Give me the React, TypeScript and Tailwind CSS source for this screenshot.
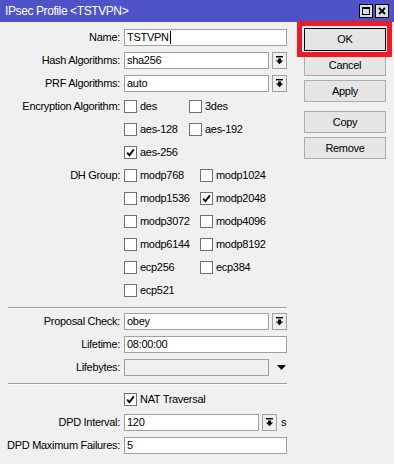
import React from "react";

const DropIcon = () => (
  <svg width="9" height="9" viewBox="0 0 9 9" className="block">
    <rect x="1" y="0" width="7" height="1.4" fill="#000" />
    <path d="M3 2.5h3v2h2.2L4.5 8.3 0.8 4.5H3z" fill="#000" />
  </svg>
);

const DropBtn = () => (
  <div className="w-[15px] h-[17px] ml-[3px] border border-[#a0a0a0] bg-[#f0f0f0] flex items-center justify-center">
    <DropIcon />
  </div>
);

const Check = () => (
  <svg width="9" height="9" viewBox="0 0 9 9" className="block">
    <path d="M1.2 4.6 L3.4 7.2 L7.8 1.4" fill="none" stroke="#000" strokeWidth="1.8" />
  </svg>
);

const Box = ({ checked }: { checked?: boolean }) => (
  <div className="w-[13px] h-[13px] border border-[#707070] bg-white flex items-center justify-center shrink-0">
    {checked ? <Check /> : null}
  </div>
);

const CB = ({ label, checked }: { label: string; checked?: boolean }) => (
  <div className="flex items-center">
    <Box checked={checked} />
    <span className="ml-[3px]">{label}</span>
  </div>
);

const Label = ({ children }: { children?: React.ReactNode }) => (
  <div className="w-[124px] pr-[4px] text-right shrink-0 whitespace-nowrap">{children}</div>
);

const Row = ({ children }: { children: React.ReactNode }) => (
  <div className="flex items-center h-[23px]">{children}</div>
);

const Input = ({ value, w, cursor }: { value: string; w: string; cursor?: boolean }) => (
  <div className={`${w} h-[17px] border border-[#a0a0a0] bg-white flex items-center pl-[2px]`}>
    <span>{value}</span>
    {cursor ? <span className="w-px h-[13px] bg-black ml-px" /> : null}
  </div>
);

const Sep = () => (
  <div className="ml-[8px] w-[279px] border-t border-t-[#a0a0a0] border-b border-b-white" />
);

const Btn = ({ label, focused, cls }: { label: string; focused?: boolean; cls: string }) => (
  <div
    className={`${cls} w-[82px] ${focused ? "h-[23px] border-[#000]" : "h-[22px] border-[#adadad]"} border bg-[#e5e5e5] flex items-center justify-center`}
  >
    {label}
  </div>
);

export default function App() {
  return (
    <div
      className="w-[394px] h-[464px] bg-[#f0f0f0] relative overflow-hidden text-[11px] text-black tracking-[-0.3px] leading-none"
      style={{ fontFamily: '"Liberation Sans", Arial, sans-serif' }}
    >
      {/* title bar */}
      <div className="h-[22px] bg-[#5053c8] flex items-center justify-between pl-[5px] pr-[5px]">
        <span className="text-white text-[12px] tracking-[-0.4px]">IPsec Profile &lt;TSTVPN&gt;</span>
        <div className="flex gap-[2px]">
          <div className="w-[14px] h-[14px] bg-[#dcdcdc] border border-black flex items-center justify-center">
            <div className="w-[8px] h-[8px] border border-black border-t-2" />
          </div>
          <div className="w-[14px] h-[14px] bg-[#dcdcdc] border border-black flex items-center justify-center">
            <svg width="8" height="8" viewBox="0 0 8 8" className="block">
              <path d="M1 1L7 7M7 1L1 7" stroke="#000" strokeWidth="1.8" />
            </svg>
          </div>
        </div>
      </div>

      <div className="flex">
        {/* left form */}
        <div className="w-[300px] flex flex-col pt-[4px]">
          <Row>
            <Label>Name:</Label>
            <Input value="TSTVPN" w="w-[163px]" cursor />
          </Row>
          <Row>
            <Label>Hash Algorithms:</Label>
            <Input value="sha256" w="w-[145px]" />
            <DropBtn />
          </Row>
          <Row>
            <Label>PRF Algorithms:</Label>
            <Input value="auto" w="w-[145px]" />
            <DropBtn />
          </Row>
          <Row>
            <Label>Encryption Algorithm:</Label>
            <div className="w-[65px]"><CB label="des" /></div>
            <CB label="3des" />
          </Row>
          <Row>
            <Label />
            <div className="w-[65px]"><CB label="aes-128" /></div>
            <CB label="aes-192" />
          </Row>
          <Row>
            <Label />
            <CB label="aes-256" checked />
          </Row>
          <Row>
            <Label>DH Group:</Label>
            <div className="w-[76px]"><CB label="modp768" /></div>
            <CB label="modp1024" />
          </Row>
          <Row>
            <Label />
            <div className="w-[76px]"><CB label="modp1536" /></div>
            <CB label="modp2048" checked />
          </Row>
          <Row>
            <Label />
            <div className="w-[76px]"><CB label="modp3072" /></div>
            <CB label="modp4096" />
          </Row>
          <Row>
            <Label />
            <div className="w-[76px]"><CB label="modp6144" /></div>
            <CB label="modp8192" />
          </Row>
          <Row>
            <Label />
            <div className="w-[76px]"><CB label="ecp256" /></div>
            <CB label="ecp384" />
          </Row>
          <Row>
            <Label />
            <CB label="ecp521" />
          </Row>
          <div className="mt-[5px]"><Sep /></div>
          <div className="mt-[1px]">
            <Row>
              <Label>Proposal Check:</Label>
              <Input value="obey" w="w-[145px]" />
              <DropBtn />
            </Row>
            <Row>
              <Label>Lifetime:</Label>
              <Input value="08:00:00" w="w-[163px]" />
            </Row>
            <Row>
              <Label>Lifebytes:</Label>
              <div className="w-[145px] h-[17px] border border-[#a0a0a0] bg-[#f0f0f0]" />
              <svg width="9" height="5" viewBox="0 0 9 5" className="block ml-[8px]">
                <path d="M0 0H9L4.5 5z" fill="#000" />
              </svg>
            </Row>
          </div>
          <div className="mt-[4px]"><Sep /></div>
          <div className="mt-[3px]">
            <Row>
              <Label />
              <CB label="NAT Traversal" checked />
            </Row>
            <Row>
              <Label>DPD Interval:</Label>
              <Input value="120" w="w-[135px]" />
              <DropBtn />
              <span className="ml-[4px]">s</span>
            </Row>
            <Row>
              <Label>DPD Maximum Failures:</Label>
              <Input value="5" w="w-[163px]" />
            </Row>
          </div>
        </div>

        {/* right buttons */}
        <div className="flex flex-col pl-[4px]">
          <Btn label="OK" focused cls="mt-[6px]" />
          <Btn label="Cancel" cls="mt-[3px]" />
          <Btn label="Apply" cls="mt-[4px]" />
          <Btn label="Copy" cls="mt-[9px]" />
          <Btn label="Remove" cls="mt-[4px]" />
        </div>
      </div>

      {/* red highlight annotation */}
      <div className="absolute left-[297px] top-[21px] w-[95px] h-[36px] border-[5px] border-[#ed1c24] pointer-events-none" />
    </div>
  );
}
